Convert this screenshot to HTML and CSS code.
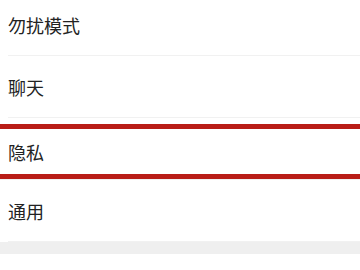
FILE: index.html
```html
<!DOCTYPE html>
<html lang="zh-CN">
<head>
    <meta charset="UTF-8">
    <meta name="viewport" content="width=device-width, initial-scale=1.0">
    <title>设置</title>
    <link rel="stylesheet" href="styles.css">
</head>
<body>
    <ul class="settings-list">
        <li class="settings-item"><span class="item-label">勿扰模式</span></li>
        <li class="settings-item"><span class="item-label">聊天</span></li>
        <li class="settings-item highlight">
            <div class="highlight-box"><span class="item-label">隐私</span></div>
        </li>
        <li class="settings-item"><span class="item-label">通用</span></li>
    </ul>
    <div class="group-gap"></div>
    <div class="next-group"></div>
</body>
</html>
```

FILE: styles.css
```css
* {
    box-sizing: border-box;
}
body {
    font-family: "Noto Sans CJK SC", "Noto Sans", sans-serif;
    margin: 0;
    padding: 0;
    background-color: #fff;
    color: #222;
    overflow: hidden;
}
.settings-list {
    list-style: none;
    margin: -6px 0 0 0;
    padding: 0 0 0 8px;
}
.settings-item {
    height: 62px;
    border-bottom: 1px solid #f1f1f1;
    display: flex;
    align-items: center;
}
.item-label {
    font-size: 18px;
    line-height: 1;
}
.settings-item.highlight {
    margin-left: -8px;
    padding-top: 6px;
    align-items: stretch;
}
.highlight-box {
    flex: 1;
    display: flex;
    align-items: center;
    padding-left: 8px;
    border-top: 5px solid #b91d17;
    border-bottom: 5px solid #b91d17;
}
.group-gap {
    height: 12px;
    background-color: #efefef;
}
.next-group {
    height: 16px;
    background-color: #fff;
}
```
